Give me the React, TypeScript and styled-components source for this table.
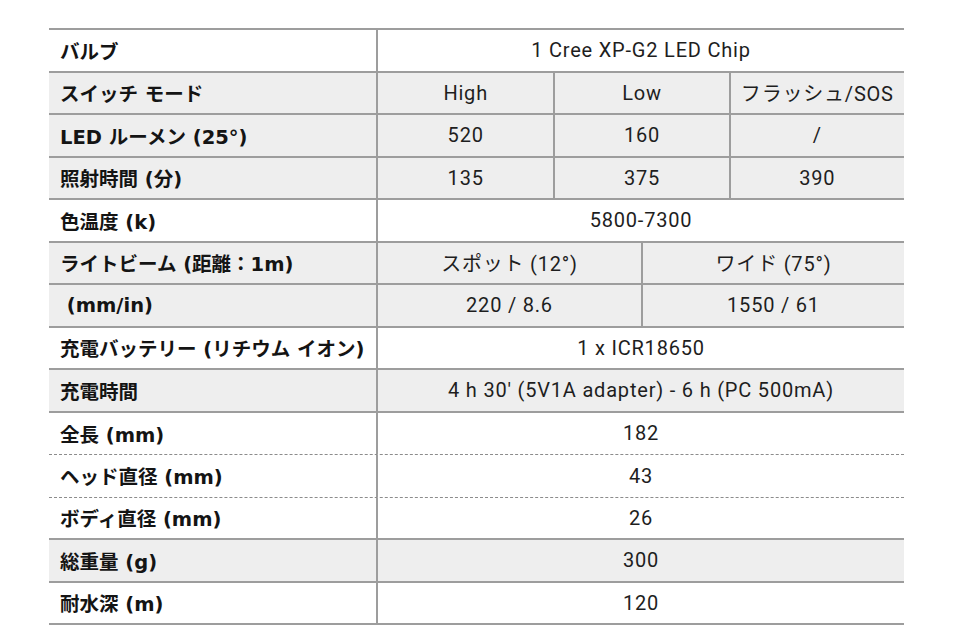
import React from 'react';
import styled, { createGlobalStyle } from 'styled-components';

const GlobalStyle = createGlobalStyle`
    body {
        margin: 0;
        background: #ffffff;
    }
`

type Line = 'solid' | 'dashed'

interface SpecRow {
    label: string
    values: string[]
    shaded?: boolean
    line?: Line
}

const rows: SpecRow[] = [
    { label: 'バルブ', values: ['1 Cree XP-G2 LED Chip'] },
    { label: 'スイッチ モード', values: ['High', 'Low', 'フラッシュ/SOS'], shaded: true },
    { label: 'LED ルーメン (25°)', values: ['520', '160', '/'], shaded: true },
    { label: '照射時間 (分)', values: ['135', '375', '390'], shaded: true },
    { label: '色温度 (k)', values: ['5800-7300'] },
    { label: 'ライトビーム (距離：1m)', values: ['スポット (12°)', 'ワイド (75°)'], shaded: true },
    { label: ' (mm/in)', values: ['220 / 8.6', '1550 / 61'], shaded: true },
    { label: '充電バッテリー (リチウム イオン)', values: ['1 x ICR18650'] },
    { label: '充電時間', values: ['4 h 30′ (5V1A adapter) - 6 h (PC 500mA)'], shaded: true },
    { label: '全長 (mm)', values: ['182'], line: 'dashed' },
    { label: 'ヘッド直径 (mm)', values: ['43'], line: 'dashed' },
    { label: 'ボディ直径 (mm)', values: ['26'] },
    { label: '総重量 (g)', values: ['300'], shaded: true },
    { label: '耐水深 (m)', values: ['120'] },
]

const App = () => {
    return <>
        <GlobalStyle />
        <Table>
            {rows.map((row, i) => (
                <Row key={i} $shaded={!!row.shaded} $line={row.line || 'solid'}>
                    <Label>{row.label}</Label>
                    <Values $count={row.values.length}>
                        {row.values.map((v, j) => (
                            <Value key={j} $first={j === 0}>{v}</Value>
                        ))}
                    </Values>
                </Row>
            ))}
        </Table>
    </>
};

const Table = styled.div`
    margin: 28px 0 0 49px;
    width: 855px;
    border-top: 2px solid #9d9d9d;
`

const Row = styled.div<{ $shaded: boolean, $line: Line }>`
    display: flex;
    height: 42.5px;
    box-sizing: border-box;
    background: ${p => p.$shaded ? '#eeeeee' : '#ffffff'};
    border-bottom: ${p => p.$line === 'dashed' ? '1px dashed #8c8c8c' : '2px solid #9d9d9d'};
`

const Label = styled.div`
    width: 329px;
    box-sizing: border-box;
    flex-shrink: 0;
    display: flex;
    align-items: center;
    padding-left: 11px;
    border-right: 2px solid #9d9d9d;
    white-space: pre;
    font-family: "DejaVu Sans", "Noto Sans CJK JP", sans-serif;
    font-weight: 700;
    font-size: 19.5px;
    color: #141414;
`

const Values = styled.div<{ $count: number }>`
    flex: 1;
    display: grid;
    grid-template-columns: repeat(${p => p.$count}, 1fr);
`

const Value = styled.div<{ $first: boolean }>`
    display: flex;
    align-items: center;
    justify-content: center;
    border-left: ${p => p.$first ? 'none' : '2px solid #9d9d9d'};
    font-family: Roboto, "Noto Sans CJK JP", sans-serif;
    font-size: 20px;
    letter-spacing: 0.04em;
    color: #1e1e1e;
    white-space: nowrap;
`

export default App;
